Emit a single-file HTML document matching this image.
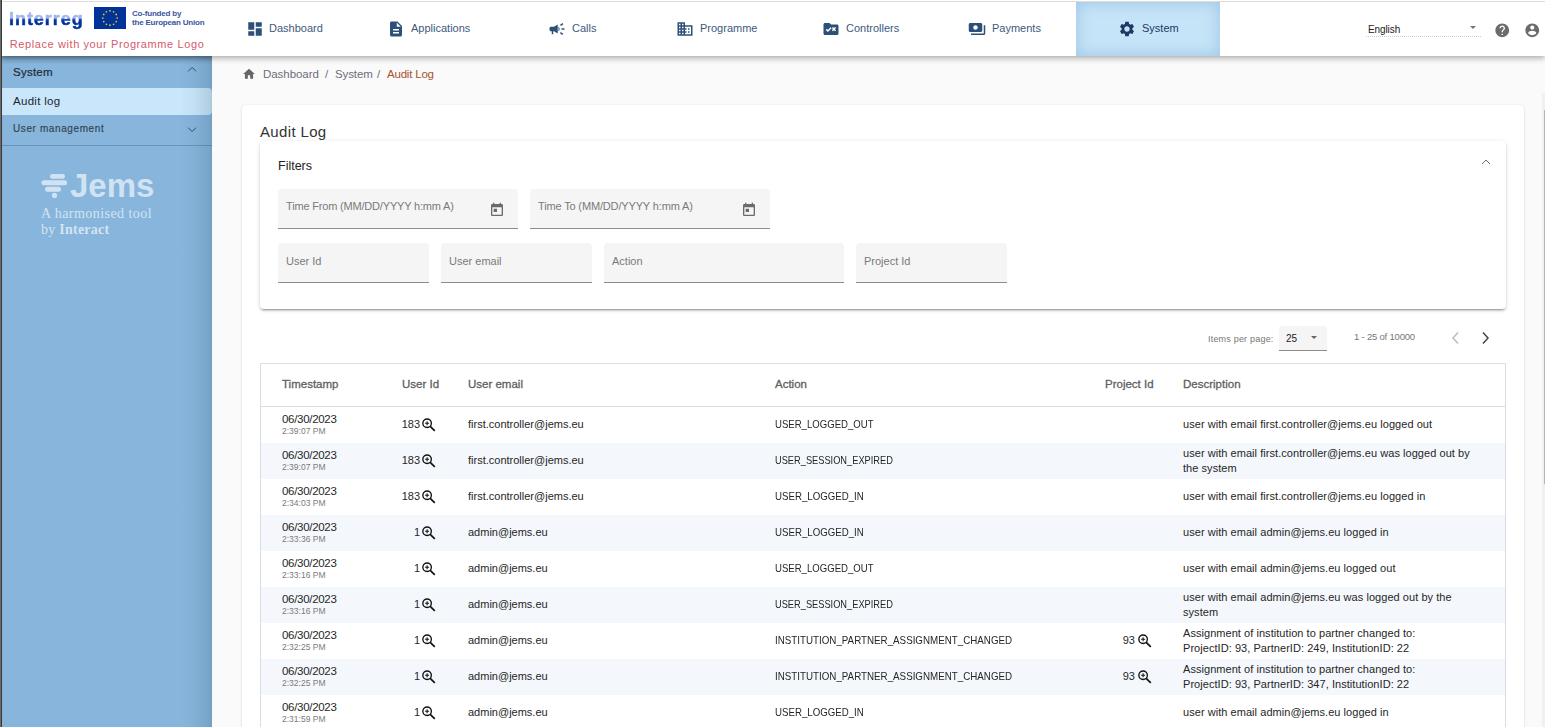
<!DOCTYPE html>
<html><head><meta charset="utf-8">
<style>
*{box-sizing:border-box;margin:0;padding:0}
html,body{width:1545px;height:727px;overflow:hidden;background:#fafafa;font-family:"Liberation Sans",sans-serif;position:relative}
.abs{position:absolute;white-space:nowrap}
#lborder{position:absolute;left:0;top:0;width:2px;height:727px;background:linear-gradient(90deg,#6a6a6a 0,#6a6a6a 1px,#3a3a3a 1px);z-index:9}
#header{position:absolute;left:2px;top:0;width:1543px;height:56px;background:#fff;z-index:5;box-shadow:0 2px 4px -1px rgba(0,0,0,.14),0 4px 5px 0 rgba(0,0,0,.12),0 1px 8px 0 rgba(0,0,0,.09)}
#topline{position:absolute;left:0;top:1px;width:1543px;height:1px;background:#dcdcdc}
.nav{position:absolute;top:0;height:56px;color:#34557b;font-size:11px}
.nav svg{position:absolute}
.nav span{position:absolute;top:21px;line-height:14px}
#sidebar{position:absolute;left:2px;top:56px;width:210px;height:671px;background:#87b5db}
#sbshade{position:absolute;left:0;top:0;width:210px;height:671px;background:linear-gradient(90deg,rgba(0,0,0,0) 0,rgba(0,0,0,0) 178px,rgba(20,50,80,.04) 192px,rgba(20,50,80,.12) 206px,rgba(20,50,80,.16) 210px);box-shadow:inset 0 6px 6px -5px rgba(0,0,0,.35);pointer-events:none}
.card{position:absolute;background:#fff;border-radius:4px}
.field{position:absolute;background:#f5f5f5;border-radius:4px 4px 0 0;border-bottom:1px solid #8c8c8c}
.field span{position:absolute;left:8px;color:#7a7a7a;font-size:11px}
.th{position:absolute;top:377px;font-size:11.5px;color:#5f5f5f;-webkit-text-stroke:0.3px #5f5f5f;line-height:14px;white-space:nowrap}
.row{position:absolute;left:261px;width:1244px;height:36px}
.row.s{background:#f4f8fc}
.c{position:absolute;font-size:11px;color:#262626;line-height:14px;white-space:nowrap;top:10px}
.d1{top:5px;left:21px;font-size:11.5px;letter-spacing:-0.3px}
.d2{top:17px;left:21px;font-size:8.5px;color:#7a7a7a}
.num{text-align:right}
.em{left:207px}
.act{left:514px;transform:scaleX(0.88);transform-origin:0 0}
.desc{left:922px;letter-spacing:0.05px}
.desc2{left:922px;top:3px;line-height:14.5px;letter-spacing:0.05px}
</style></head><body>
<div id="lborder"></div>
<div id="header">
  <div id="topline"></div>
  <div class="abs" id="interreg" style="left:7px;top:8px;font-size:18px;font-weight:bold;letter-spacing:0.95px;line-height:22px;color:#003399;background:linear-gradient(180deg,#a3b6ec 0,#a3b6ec 10px,#1e4bb0 11.5px,#003399 13px,#003399 100%);-webkit-background-clip:text;background-clip:text;-webkit-text-fill-color:transparent;-webkit-text-stroke:0.5px transparent">Interreg</div>
  <svg class="abs" style="left:92px;top:7px" width="32" height="22" viewBox="0 0 32 22">
    <rect width="32" height="22" fill="#003399"/>
    <g fill="#ffcc00"><circle cx="16.00" cy="3.80" r="0.85"/><circle cx="19.60" cy="4.76" r="0.85"/><circle cx="22.24" cy="7.40" r="0.85"/><circle cx="23.20" cy="11.00" r="0.85"/><circle cx="22.24" cy="14.60" r="0.85"/><circle cx="19.60" cy="17.24" r="0.85"/><circle cx="16.00" cy="18.20" r="0.85"/><circle cx="12.40" cy="17.24" r="0.85"/><circle cx="9.76" cy="14.60" r="0.85"/><circle cx="8.80" cy="11.00" r="0.85"/><circle cx="9.76" cy="7.40" r="0.85"/><circle cx="12.40" cy="4.76" r="0.85"/></g>
  </svg>
  <div class="abs" style="left:130px;top:10px;font-size:8px;font-weight:bold;line-height:8.6px;color:#3a56a0;letter-spacing:-0.2px">Co-funded by<br>the European Union</div>
  <div class="abs" id="replace" style="left:7.7px;top:37px;font-size:11px;line-height:14px;color:#d65a6a;letter-spacing:0.6px">Replace with your Programme Logo</div>
  <div class="abs" style="left:1366px;top:23px;font-size:10px;line-height:14px;color:#222;letter-spacing:-0.1px">English</div>
  <div class="abs" style="left:1364px;top:36px;width:115px;height:1px;border-top:1px dotted #cfcfcf"></div>
  <svg class="abs" style="left:1466px;top:26px" width="10" height="5" viewBox="0 0 10 5"><path d="M2 0h6L5 3z" fill="#757575"/></svg>
  <svg class="abs" style="left:1491.65px;top:21.65px" width="16.5" height="16.5" viewBox="0 0 24 24"><path fill="#6b6b6b" d="M12 2C6.48 2 2 6.48 2 12s4.48 10 10 10 10-4.48 10-10S17.52 2 12 2zm1 17h-2v-2h2v2zm2.07-7.75l-.9.92C13.45 12.9 13 13.5 13 15h-2v-.5c0-1.1.45-2.1 1.17-2.83l1.24-1.26c.37-.36.59-.86.59-1.41 0-1.1-.9-2-2-2s-2 .9-2 2H8c0-2.21 1.79-4 4-4s4 1.79 4 4c0 .88-.36 1.68-.93 2.25z"/></svg>
  <svg class="abs" style="left:1521.85px;top:21.65px" width="16.5" height="16.5" viewBox="0 0 24 24"><path fill="#6b6b6b" d="M12 2C6.48 2 2 6.48 2 12s4.48 10 10 10 10-4.48 10-10S17.52 2 12 2zm0 3c1.66 0 3 1.34 3 3s-1.34 3-3 3-3-1.34-3-3 1.34-3 3-3zm0 14.2c-2.5 0-4.71-1.28-6-3.22.03-1.99 4-3.08 6-3.08 1.99 0 5.97 1.09 6 3.08-1.29 1.94-3.5 3.22-6 3.22z"/></svg>
  <div style="position:absolute;left:1074px;top:2px;width:144px;height:54px;background:#c6e4f8;box-shadow:inset 0 0 14px 2px rgba(120,170,210,.45)"></div>
  <svg class="abs" style="left:243.6px;top:20px" width="18" height="18" viewBox="0 0 24 24"><path fill="#2c5078" d="M3 13h8V3H3v10zm0 8h8v-6H3v6zm10 0h8V11h-8v10zm0-18v6h8V3h-8z"/></svg>
  <div class="abs" style="left:267px;top:22px;font-size:11px;color:#3d5a7e">Dashboard</div>
  <svg class="abs" style="left:385px;top:20px" width="18" height="18" viewBox="0 0 24 24"><path fill="#2c5078" d="M14 2H6c-1.1 0-1.99.9-1.99 2L4 20c0 1.1.89 2 1.99 2H18c1.1 0 2-.9 2-2V8l-6-6zm2 16H8v-2h8v2zm0-4H8v-2h8v2zm-3-5V3.5L18.5 9H13z"/></svg>
  <div class="abs" style="left:409px;top:22px;font-size:11px;color:#3d5a7e">Applications</div>
  <svg class="abs" style="left:546.1px;top:20px" width="18" height="18" viewBox="0 0 24 24"><path fill="#2c5078" d="M18 11v2h4v-2h-4zm-2 6.61c.96.71 2.210 1.65 3.2 2.39.4-.53.8-1.07 1.2-1.6-.99-.74-2.24-1.68-3.2-2.4-.4.54-.8 1.08-1.2 1.61zM20.4 5.6c-.4-.53-.8-1.07-1.2-1.6-.99.74-2.24 1.68-3.2 2.4.4.53.8 1.07 1.2 1.6.96-.72 2.21-1.65 3.2-2.4zM4 9c-1.1 0-2 .9-2 2v2c0 1.1.9 2 2 2h1v4h2v-4h1l5 3V6L8 9H4zm11.5 3c0-1.33-.58-2.53-1.5-3.35v6.69c.92-.81 1.5-2.01 1.5-3.34z"/></svg>
  <div class="abs" style="left:570px;top:22px;font-size:11px;color:#3d5a7e">Calls</div>
  <svg class="abs" style="left:673.7px;top:20px" width="18" height="18" viewBox="0 0 24 24"><path fill="#2c5078" d="M12 7V3H2v18h20V7H12zM6 19H4v-2h2v2zm0-4H4v-2h2v2zm0-4H4V9h2v2zm0-4H4V5h2v2zm4 12H8v-2h2v2zm0-4H8v-2h2v2zm0-4H8V9h2v2zm0-4H8V5h2v2zm10 12h-8v-2h2v-2h-2v-2h2v-2h-2V9h8v10zm-2-8h-2v2h2v-2zm0 4h-2v2h2v-2z"/></svg>
  <div class="abs" style="left:698px;top:22px;font-size:11px;color:#3d5a7e">Programme</div>
  <svg class="abs" style="left:820.2px;top:20px" width="18" height="18" viewBox="0 0 24 24"><path fill="#2c5078" d="M20 6h-8l-2-2H4c-1.1 0-1.99.9-1.99 2L2 18c0 1.1.9 2 2 2h16c1.1 0 2-.9 2-2V8c0-1.1-.9-2-2-2zM7.83 16L5 13.17l1.41-1.41 1.41 1.41 3.540-3.54 1.41 1.41L7.83 16zm9.58-3l1.41 1.41L17.41 15 16 13.59 14.59 15l-1.41-1.41L14.59 12l-1.410-1.41 1.41-1.41L16 10.59l1.41-1.41 1.41 1.41L17.41 12z"/></svg>
  <div class="abs" style="left:844px;top:22px;font-size:11px;color:#3d5a7e">Controllers</div>
  <svg class="abs" style="left:966px;top:20px" width="18" height="18" viewBox="0 0 24 24"><path fill="#2c5078" d="M19 14V6c0-1.1-.9-2-2-2H3c-1.1 0-2 .9-2 2v8c0 1.1.9 2 2 2h14c1.1 0 2-.9 2-2zm-9-1c-1.66 0-3-1.34-3-3s1.34-3 3-3 3 1.34 3 3-1.34 3-3 3zm13-6v11c0 1.1-.9 2-2 2H4v-2h17V7h2z"/></svg>
  <div class="abs" style="left:990px;top:22px;font-size:11px;color:#3d5a7e">Payments</div>
  <svg class="abs" style="left:1115.7px;top:20px" width="18" height="18" viewBox="0 0 24 24"><path fill="#1d3a66" d="M19.14 12.94c.04-.3.06-.61.06-.94 0-.32-.02-.64-.07-.94l2.03-1.58c.18-.14.23-.41.12-.61l-1.92-3.32c-.12-.22-.37-.29-.59-.22l-2.39.96c-.5-.38-1.03-.7-1.62-.94L14.4 2.81c-.04-.24-.24-.41-.48-.41h-3.84c-.24 0-.43.17-.47.41L9.25 5.35c-.59.24-1.13.57-1.62.94l-2.39-.96c-.22-.08-.47 0-.59.22L2.74 8.87c-.12.21-.08.47.12.61l2.03 1.58c-.05.3-.09.63-.09.94s.02.64.07.94l-2.03 1.58c-.18.14-.23.41-.12.61l1.92 3.32c.12.22.37.29.59.22l2.39-.96c.5.38 1.030.7 1.62.94l.36 2.54c.05.24.24.41.48.41h3.84c.24 0 .44-.17.47-.41l.36-2.54c.59-.24 1.13-.56 1.62-.94l2.39.96c.22.08.47 0 .59-.22l1.92-3.32c.12-.22.07-.47-.12-.61l-2.01-1.58zM12 15.6c-1.98 0-3.6-1.62-3.6-3.6s1.62-3.6 3.6-3.6 3.6 1.62 3.6 3.6-1.62 3.6-3.6 3.6z"/></svg>
  <div class="abs" style="left:1140px;top:22px;font-size:11px;color:#1d3a66">System</div>
</div>
<div id="sidebar">
  <div class="abs" style="left:11px;top:9px;font-size:11.5px;line-height:14px;color:#1e2b38;-webkit-text-stroke:0.2px #1e2b38;letter-spacing:0.25px">System</div>
  <svg class="abs" style="left:184px;top:8px" width="16" height="16" viewBox="0 0 16 16"><path d="M2.2 7.3L6.1 3.4L10 7.3" fill="none" stroke="#3a4a5a" stroke-width="1"/></svg>
  <div style="position:absolute;left:0;top:32px;width:210px;height:27px;background:#c9e6fa;border-radius:0 4px 4px 0"></div>
  <div class="abs" style="left:11px;top:38px;font-size:11.5px;line-height:14px;color:#1e2630;letter-spacing:0.3px">Audit log</div>
  <div class="abs" style="left:11px;top:66px;font-size:10px;line-height:13px;color:#34434f;-webkit-text-stroke:0.15px #34434f;letter-spacing:0.6px">User management</div>
  <svg class="abs" style="left:184px;top:68px" width="16" height="16" viewBox="0 0 16 16"><path d="M2.2 3.7L6.1 7.6L10 3.7" fill="none" stroke="#3a4a5a" stroke-width="1"/></svg>
  <div style="position:absolute;left:0;top:89px;width:210px;height:1px;background:#6e93b3"></div>
  <svg class="abs" style="left:39px;top:117px" width="28" height="26" viewBox="0 0 28 26"><g fill="#d1e3f3"><rect x="9" y="1" width="15" height="4.8" rx="2.4"/><rect x="0.4" y="7.3" width="25.7" height="5" rx="2.5"/><rect x="4" y="13.8" width="16" height="5" rx="2.5"/><circle cx="13.5" cy="22.4" r="2.6"/></g></svg>
  <div class="abs" style="left:68px;top:111px;font-size:33px;line-height:37px;font-weight:bold;color:#d1e3f3;letter-spacing:0px">Jems</div>
  <div class="abs" style="left:39px;top:150px;font-family:'Liberation Serif',serif;font-size:14px;line-height:16px;color:#d3e4f3;letter-spacing:0.45px">A harmonised tool</div>
  <div class="abs" style="left:39px;top:166px;font-family:'Liberation Serif',serif;font-size:14px;line-height:16px;color:#d3e4f3;letter-spacing:0.25px">by <b>Interact</b></div>
  <div id="sbshade"></div>
</div>

<div class="abs" style="left:242px;top:67px"><svg width="14" height="14" viewBox="0 0 24 24"><path fill="#666" d="M10 20v-6h4v6h5v-8h3L12 3 2 12h3v8z"/></svg></div>
<div class="abs" style="left:263px;top:67px;font-size:11.5px;line-height:14px;color:#6f6e7a;letter-spacing:-0.05px">Dashboard</div>
<div class="abs" style="left:325px;top:67px;font-size:11.5px;line-height:14px;color:#6f6e7a">/</div>
<div class="abs" style="left:335px;top:67px;font-size:11.5px;line-height:14px;color:#6f6e7a;letter-spacing:-0.1px">System</div>
<div class="abs" style="left:377px;top:67px;font-size:11.5px;line-height:14px;color:#6f6e7a">/</div>
<div class="abs" style="left:387px;top:67px;font-size:11.5px;line-height:14px;color:#a9512e;letter-spacing:-0.2px">Audit Log</div>
<div class="card" style="left:242px;top:105px;width:1282px;height:640px;box-shadow:0 1px 3px rgba(0,0,0,.12),0 0 1px rgba(0,0,0,.1)">
  <div class="abs" style="left:18px;top:18px;font-size:15px;line-height:18px;color:#333;letter-spacing:0.35px">Audit Log</div>
  <div class="card" style="left:18px;top:36px;width:1246px;height:168px;box-shadow:0 3px 1px -2px rgba(0,0,0,.2),0 2px 2px 0 rgba(0,0,0,.14),0 1px 5px 0 rgba(0,0,0,.12)">
    <div class="abs" style="left:18px;top:17px;font-size:12.5px;line-height:16px;color:#222">Filters</div>
    <svg class="abs" style="left:1220px;top:17px" width="12" height="8" viewBox="0 0 12 8"><path d="M2 6L6 2l4 4" fill="none" stroke="#6e6e6e" stroke-width="1"/></svg>
    <div class="field" style="left:18px;top:48px;width:240px;height:40px"><span style="top:11px;letter-spacing:-0.18px">Time From (MM/DD/YYYY h:mm A)</span><svg class="abs" style="left:211px;top:13px" width="16" height="16" viewBox="0 0 24 24"><path fill="#6b6b6b" d="M19 3h-1V1h-2v2H8V1H6v2H5c-1.11 0-1.99.9-1.99 2L3 19c0 1.1.89 2 2 2h14c1.1 0 2-.9 2-2V5c0-1.1-.9-2-2-2zm0 16H5V8h14v11zM7 10h5v5H7z"/></svg></div>
    <div class="field" style="left:270px;top:48px;width:240px;height:40px"><span style="top:11px;letter-spacing:-0.15px">Time To (MM/DD/YYYY h:mm A)</span><svg class="abs" style="left:211px;top:13px" width="16" height="16" viewBox="0 0 24 24"><path fill="#6b6b6b" d="M19 3h-1V1h-2v2H8V1H6v2H5c-1.11 0-1.99.9-1.99 2L3 19c0 1.1.89 2 2 2h14c1.1 0 2-.9 2-2V5c0-1.1-.9-2-2-2zm0 16H5V8h14v11zM7 10h5v5H7z"/></svg></div>
    <div class="field" style="left:18px;top:102px;width:151px;height:40px"><span style="top:12px">User Id</span></div>
    <div class="field" style="left:181px;top:102px;width:151px;height:40px"><span style="top:12px">User email</span></div>
    <div class="field" style="left:344px;top:102px;width:240px;height:40px"><span style="top:12px">Action</span></div>
    <div class="field" style="left:596px;top:102px;width:151px;height:40px"><span style="top:12px">Project Id</span></div>
  </div>
</div>
<div class="abs" style="left:1208px;top:333px;font-size:9px;line-height:12px;color:#777;letter-spacing:0.2px">Items per page:</div>
<div class="field" style="left:1279px;top:326px;width:48px;height:25px;border-bottom-color:#8c8c8c"><span style="left:7px;top:7px;color:#222;font-size:10px">25</span><svg class="abs" style="left:32px;top:10px" width="6" height="4" viewBox="0 0 6 4"><path d="M0 0h6L3 3z" fill="#666"/></svg></div>
<div class="abs" style="left:1354px;top:331px;font-size:9.5px;line-height:12px;color:#777;letter-spacing:-0.2px">1 - 25 of 10000</div>
<svg class="abs" style="left:1449px;top:331px" width="12" height="14" viewBox="0 0 12 14"><path d="M9 1.5L4 7l5 5.5" fill="none" stroke="#bdbdbd" stroke-width="1.5"/></svg>
<svg class="abs" style="left:1480px;top:331px" width="12" height="14" viewBox="0 0 12 14"><path d="M3 1.5L8 7l-5 5.5" fill="none" stroke="#444" stroke-width="1.5"/></svg>
<div style="position:absolute;left:260px;top:363px;width:1246px;height:380px;border:1px solid #d7dee6;background:#fff"></div>
<div style="position:absolute;left:261px;top:406px;width:1244px;height:1px;background:#d7dee6"></div>
<div style="position:absolute;left:1542px;top:93px;width:3px;height:634px;background:#f0f0f0"></div><div style="position:absolute;left:1543.5px;top:110px;width:1.5px;height:374px;background:#b5b5b5"></div>
<!--TABLE-->
<div class="th" style="left:282px">Timestamp</div>
<div class="th" style="left:402px">User Id</div>
<div class="th" style="left:468px">User email</div>
<div class="th" style="left:775px">Action</div>
<div class="th" style="left:1105px">Project Id</div>
<div class="th" style="left:1183px">Description</div>
<div class="row" style="top:407px"><div class="c d1">06/30/2023</div><div class="c d2">2:39:07 PM</div><div class="c num" style="right:1085px">183</div><div style="position:absolute;left:159px;top:9px"><svg width="18" height="18" viewBox="0 0 18 18" style="position:absolute;left:0;top:0"><g fill="none" stroke="#111"><circle cx="7.1" cy="7.2" r="4.25" stroke-width="1.35"/><path d="M5.1 7.2h4M7.1 5.2v4" stroke-width="1.05"/><path d="M10.2 10.3l4.6 4.5" stroke-width="1.7"/></g></svg></div><div class="c em">first.controller@jems.eu</div><div class="c act" style="transform:scaleX(0.871)">USER_LOGGED_OUT</div><div class="c desc">user with email first.controller@jems.eu logged out</div></div>
<div class="row s" style="top:443px"><div class="c d1">06/30/2023</div><div class="c d2">2:39:07 PM</div><div class="c num" style="right:1085px">183</div><div style="position:absolute;left:159px;top:9px"><svg width="18" height="18" viewBox="0 0 18 18" style="position:absolute;left:0;top:0"><g fill="none" stroke="#111"><circle cx="7.1" cy="7.2" r="4.25" stroke-width="1.35"/><path d="M5.1 7.2h4M7.1 5.2v4" stroke-width="1.05"/><path d="M10.2 10.3l4.6 4.5" stroke-width="1.7"/></g></svg></div><div class="c em">first.controller@jems.eu</div><div class="c act" style="transform:scaleX(0.842)">USER_SESSION_EXPIRED</div><div class="c desc2">user with email first.controller@jems.eu was logged out by<br>the system</div></div>
<div class="row" style="top:479px"><div class="c d1">06/30/2023</div><div class="c d2">2:34:03 PM</div><div class="c num" style="right:1085px">183</div><div style="position:absolute;left:159px;top:9px"><svg width="18" height="18" viewBox="0 0 18 18" style="position:absolute;left:0;top:0"><g fill="none" stroke="#111"><circle cx="7.1" cy="7.2" r="4.25" stroke-width="1.35"/><path d="M5.1 7.2h4M7.1 5.2v4" stroke-width="1.05"/><path d="M10.2 10.3l4.6 4.5" stroke-width="1.7"/></g></svg></div><div class="c em">first.controller@jems.eu</div><div class="c act" style="transform:scaleX(0.88)">USER_LOGGED_IN</div><div class="c desc">user with email first.controller@jems.eu logged in</div></div>
<div class="row s" style="top:515px"><div class="c d1">06/30/2023</div><div class="c d2">2:33:36 PM</div><div class="c num" style="right:1085px">1</div><div style="position:absolute;left:159px;top:9px"><svg width="18" height="18" viewBox="0 0 18 18" style="position:absolute;left:0;top:0"><g fill="none" stroke="#111"><circle cx="7.1" cy="7.2" r="4.25" stroke-width="1.35"/><path d="M5.1 7.2h4M7.1 5.2v4" stroke-width="1.05"/><path d="M10.2 10.3l4.6 4.5" stroke-width="1.7"/></g></svg></div><div class="c em">admin@jems.eu</div><div class="c act" style="transform:scaleX(0.88)">USER_LOGGED_IN</div><div class="c desc">user with email admin@jems.eu logged in</div></div>
<div class="row" style="top:551px"><div class="c d1">06/30/2023</div><div class="c d2">2:33:16 PM</div><div class="c num" style="right:1085px">1</div><div style="position:absolute;left:159px;top:9px"><svg width="18" height="18" viewBox="0 0 18 18" style="position:absolute;left:0;top:0"><g fill="none" stroke="#111"><circle cx="7.1" cy="7.2" r="4.25" stroke-width="1.35"/><path d="M5.1 7.2h4M7.1 5.2v4" stroke-width="1.05"/><path d="M10.2 10.3l4.6 4.5" stroke-width="1.7"/></g></svg></div><div class="c em">admin@jems.eu</div><div class="c act" style="transform:scaleX(0.871)">USER_LOGGED_OUT</div><div class="c desc">user with email admin@jems.eu logged out</div></div>
<div class="row s" style="top:587px"><div class="c d1">06/30/2023</div><div class="c d2">2:33:16 PM</div><div class="c num" style="right:1085px">1</div><div style="position:absolute;left:159px;top:9px"><svg width="18" height="18" viewBox="0 0 18 18" style="position:absolute;left:0;top:0"><g fill="none" stroke="#111"><circle cx="7.1" cy="7.2" r="4.25" stroke-width="1.35"/><path d="M5.1 7.2h4M7.1 5.2v4" stroke-width="1.05"/><path d="M10.2 10.3l4.6 4.5" stroke-width="1.7"/></g></svg></div><div class="c em">admin@jems.eu</div><div class="c act" style="transform:scaleX(0.842)">USER_SESSION_EXPIRED</div><div class="c desc2">user with email admin@jems.eu was logged out by the<br>system</div></div>
<div class="row" style="top:623px"><div class="c d1">06/30/2023</div><div class="c d2">2:32:25 PM</div><div class="c num" style="right:1085px">1</div><div style="position:absolute;left:159px;top:9px"><svg width="18" height="18" viewBox="0 0 18 18" style="position:absolute;left:0;top:0"><g fill="none" stroke="#111"><circle cx="7.1" cy="7.2" r="4.25" stroke-width="1.35"/><path d="M5.1 7.2h4M7.1 5.2v4" stroke-width="1.05"/><path d="M10.2 10.3l4.6 4.5" stroke-width="1.7"/></g></svg></div><div class="c em">admin@jems.eu</div><div class="c act" style="transform:scaleX(0.889)">INSTITUTION_PARTNER_ASSIGNMENT_CHANGED</div><div class="c num" style="right:370px">93</div><div style="position:absolute;left:874.5px;top:9px"><svg width="18" height="18" viewBox="0 0 18 18" style="position:absolute;left:0;top:0"><g fill="none" stroke="#111"><circle cx="7.1" cy="7.2" r="4.25" stroke-width="1.35"/><path d="M5.1 7.2h4M7.1 5.2v4" stroke-width="1.05"/><path d="M10.2 10.3l4.6 4.5" stroke-width="1.7"/></g></svg></div><div class="c desc2">Assignment of institution to partner changed to:<br>ProjectID: 93, PartnerID: 249, InstitutionID: 22</div></div>
<div class="row s" style="top:659px"><div class="c d1">06/30/2023</div><div class="c d2">2:32:25 PM</div><div class="c num" style="right:1085px">1</div><div style="position:absolute;left:159px;top:9px"><svg width="18" height="18" viewBox="0 0 18 18" style="position:absolute;left:0;top:0"><g fill="none" stroke="#111"><circle cx="7.1" cy="7.2" r="4.25" stroke-width="1.35"/><path d="M5.1 7.2h4M7.1 5.2v4" stroke-width="1.05"/><path d="M10.2 10.3l4.6 4.5" stroke-width="1.7"/></g></svg></div><div class="c em">admin@jems.eu</div><div class="c act" style="transform:scaleX(0.889)">INSTITUTION_PARTNER_ASSIGNMENT_CHANGED</div><div class="c num" style="right:370px">93</div><div style="position:absolute;left:874.5px;top:9px"><svg width="18" height="18" viewBox="0 0 18 18" style="position:absolute;left:0;top:0"><g fill="none" stroke="#111"><circle cx="7.1" cy="7.2" r="4.25" stroke-width="1.35"/><path d="M5.1 7.2h4M7.1 5.2v4" stroke-width="1.05"/><path d="M10.2 10.3l4.6 4.5" stroke-width="1.7"/></g></svg></div><div class="c desc2">Assignment of institution to partner changed to:<br>ProjectID: 93, PartnerID: 347, InstitutionID: 22</div></div>
<div class="row" style="top:695px"><div class="c d1">06/30/2023</div><div class="c d2">2:31:59 PM</div><div class="c num" style="right:1085px">1</div><div style="position:absolute;left:159px;top:9px"><svg width="18" height="18" viewBox="0 0 18 18" style="position:absolute;left:0;top:0"><g fill="none" stroke="#111"><circle cx="7.1" cy="7.2" r="4.25" stroke-width="1.35"/><path d="M5.1 7.2h4M7.1 5.2v4" stroke-width="1.05"/><path d="M10.2 10.3l4.6 4.5" stroke-width="1.7"/></g></svg></div><div class="c em">admin@jems.eu</div><div class="c act" style="transform:scaleX(0.88)">USER_LOGGED_IN</div><div class="c desc">user with email admin@jems.eu logged in</div></div>
<!--/TABLE-->
</body></html>
